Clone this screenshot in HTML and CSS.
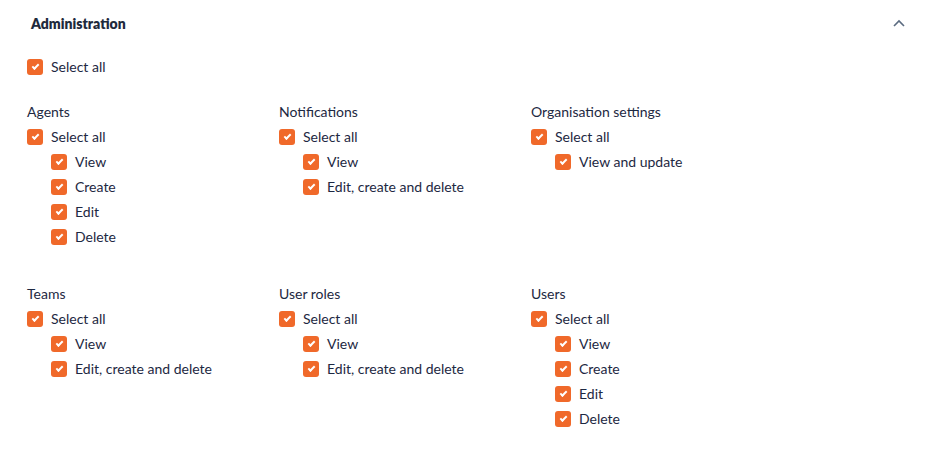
FILE: index.html
```html
<!DOCTYPE html>
<html lang="en">
<head>
  <meta charset="UTF-8" />
  <title>Administration</title>
  <link rel="stylesheet" href="styles.css">
</head>
<body>
  <div class="panel">
    <div class="panel-header">
      <h2>Administration</h2>
      <svg class="chevron" width="12" height="8" viewBox="0 0 12 8"><path d="M1 7 L6 2 L11 7" fill="none" stroke="#5b6b80" stroke-width="1.6"/></svg>
    </div>

    <label class="check top"><span class="box"></span>Select all</label>

    <div class="groups">
      <div class="group">
        <div class="group-title">Agents</div>
        <label class="check"><span class="box"></span>Select all</label>
        <label class="check sub"><span class="box"></span>View</label>
        <label class="check sub"><span class="box"></span>Create</label>
        <label class="check sub"><span class="box"></span>Edit</label>
        <label class="check sub"><span class="box"></span>Delete</label>
      </div>
      <div class="group">
        <div class="group-title">Notifications</div>
        <label class="check"><span class="box"></span>Select all</label>
        <label class="check sub"><span class="box"></span>View</label>
        <label class="check sub"><span class="box"></span>Edit, create and delete</label>
      </div>
      <div class="group">
        <div class="group-title">Organisation settings</div>
        <label class="check"><span class="box"></span>Select all</label>
        <label class="check sub"><span class="box"></span>View and update</label>
      </div>
      <div class="group">
        <div class="group-title">Teams</div>
        <label class="check"><span class="box"></span>Select all</label>
        <label class="check sub"><span class="box"></span>View</label>
        <label class="check sub"><span class="box"></span>Edit, create and delete</label>
      </div>
      <div class="group">
        <div class="group-title">User roles</div>
        <label class="check"><span class="box"></span>Select all</label>
        <label class="check sub"><span class="box"></span>View</label>
        <label class="check sub"><span class="box"></span>Edit, create and delete</label>
      </div>
      <div class="group">
        <div class="group-title">Users</div>
        <label class="check"><span class="box"></span>Select all</label>
        <label class="check sub"><span class="box"></span>View</label>
        <label class="check sub"><span class="box"></span>Create</label>
        <label class="check sub"><span class="box"></span>Edit</label>
        <label class="check sub"><span class="box"></span>Delete</label>
      </div>
    </div>
  </div>
</body>
</html>
```

FILE: styles.css
```css
:root {
  --orange: #f0692a;
  --text: #1d2842;
}

* {
  box-sizing: border-box;
}

body {
  margin: 0;
  background: #fff;
  font-family: Lato, 'Open Sans', sans-serif;
  font-size: 14px;
  color: var(--text);
}

.panel {
  padding: 0 28px 0 27px;
}

.panel-header {
  display: flex;
  justify-content: space-between;
  align-items: center;
  height: 47px;
}

.panel-header h2 {
  margin: 0 0 0 4px;
  font-size: 14px;
  font-weight: 800;
  color: #1e2a3c;
}

.chevron {
  margin-top: -2px;
}

.check {
  display: flex;
  align-items: center;
  gap: 8px;
  height: 25px;
}

.check.top {
  margin-top: 7px;
  margin-bottom: 20px;
}

.check.sub {
  padding-left: 24px;
}

.box {
  position: relative;
  width: 16px;
  height: 16px;
  border-radius: 3px;
  background: var(--orange);
  flex-shrink: 0;
}

/* галочка */
.box::after {
  content: "";
  position: absolute;
  left: 5px;
  top: 5px;
  width: 5px;
  height: 2px;
  border-left: 2px solid #fff;
  border-bottom: 2px solid #fff;
  transform: rotate(-45deg);
}

.groups {
  display: grid;
  grid-template-columns: 252px 252px 252px;
  row-gap: 32px;
}

.group-title {
  height: 25px;
  line-height: 25px;
}
```
